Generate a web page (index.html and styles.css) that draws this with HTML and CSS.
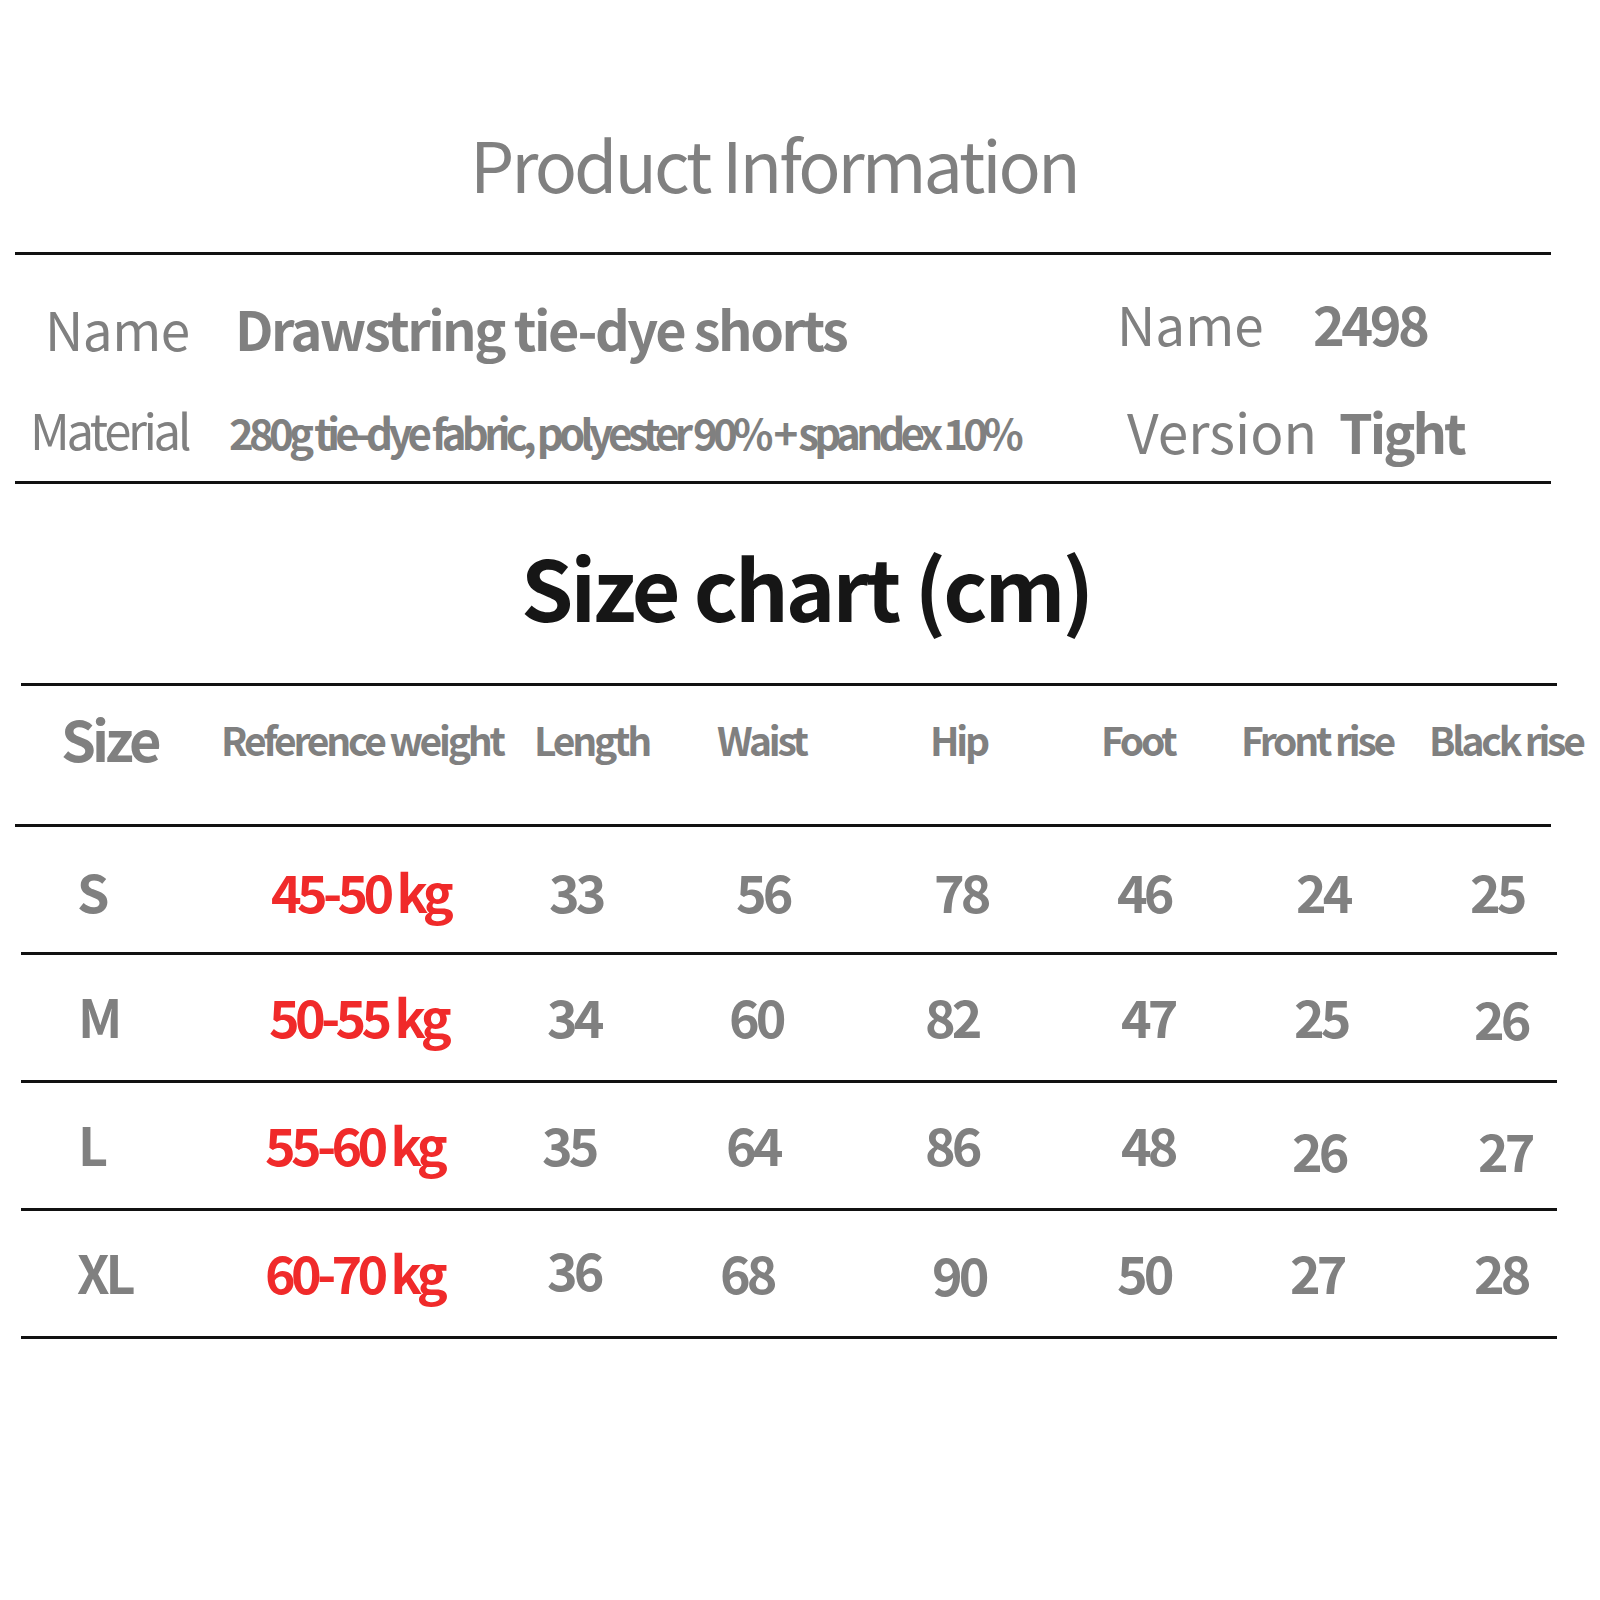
FILE: index.html
```html
<!DOCTYPE html>
<html lang="en">
<head>
<meta charset="utf-8">
<title>Product Information</title>
<link rel="stylesheet" href="styles.css">
</head>
<body>
<div class="page">
  <h1 class="title">Product Information</h1>
  <div class="rule rule-a"></div>

  <div class="info">
    <div class="info-left">
      <div class="info-row row-name">
        <span class="lbl lbl-name">Name</span>
        <span class="val val-name">Drawstring tie-dye shorts</span>
      </div>
      <div class="info-row row-mat">
        <span class="lbl lbl-mat">Material</span>
        <span class="val val-mat">280g tie-dye fabric, polyester 90% + spandex 10%</span>
      </div>
    </div>
    <div class="info-right">
      <div class="info-row row-code">
        <span class="lbl lbl-code">Name</span>
        <span class="val val-code">2498</span>
      </div>
      <div class="info-row row-ver">
        <span class="lbl lbl-ver">Version</span>
        <span class="val val-ver">Tight</span>
      </div>
    </div>
  </div>

  <div class="rule rule-a"></div>

  <h2 class="chart-title">Size chart (cm)</h2>

  <div class="rule rule-b"></div>

  <div class="thead">
    <span class="th th-size">Size</span>
    <span class="th">Reference weight</span>
    <span class="th">Length</span>
    <span class="th">Waist</span>
    <span class="th">Hip</span>
    <span class="th">Foot</span>
    <span class="th">Front rise</span>
    <span class="th">Black rise</span>
  </div>

  <div class="rule rule-a"></div>

  <div class="trow r-s">
    <span class="td td-size">S</span>
    <span class="td td-kg">45-50 kg</span>
    <span class="td">33</span>
    <span class="td">56</span>
    <span class="td">78</span>
    <span class="td">46</span>
    <span class="td">24</span>
    <span class="td">25</span>
  </div>
  <div class="rule rule-b"></div>

  <div class="trow r-m">
    <span class="td td-size">M</span>
    <span class="td td-kg">50-55 kg</span>
    <span class="td">34</span>
    <span class="td">60</span>
    <span class="td">82</span>
    <span class="td">47</span>
    <span class="td">25</span>
    <span class="td low-2">26</span>
  </div>
  <div class="rule rule-b"></div>

  <div class="trow r-l">
    <span class="td td-size">L</span>
    <span class="td td-kg">55-60 kg</span>
    <span class="td">35</span>
    <span class="td">64</span>
    <span class="td">86</span>
    <span class="td">48</span>
    <span class="td low-6">26</span>
    <span class="td low-6">27</span>
  </div>
  <div class="rule rule-b"></div>

  <div class="trow r-xl">
    <span class="td td-size">XL</span>
    <span class="td td-kg">60-70 kg</span>
    <span class="td high-3">36</span>
    <span class="td">68</span>
    <span class="td low-2">90</span>
    <span class="td">50</span>
    <span class="td">27</span>
    <span class="td">28</span>
  </div>
  <div class="rule rule-b"></div>
</div>
</body>
</html>
```

FILE: styles.css
```css
html, body {
  margin: 0;
  padding: 0;
  background: #ffffff;
}

body {
  font-family: "Noto Sans CJK SC", "Noto Sans", sans-serif;
  color: #808080;
}

.page {
  width: 1600px;
  height: 1600px;
  padding-top: 128px;
  box-sizing: border-box;
  white-space: nowrap;
}

.title {
  margin: 0 0 54px 470px;
  font-size: 70px;
  font-weight: 400;
  line-height: 1;
  color: #808080;
  letter-spacing: -3px;
}

.rule {
  height: 3px;
  width: 1536px;
  background: #111111;
}

.rule-a { margin-left: 15px; }
.rule-b { margin-left: 21px; }

/* ---------- info block ---------- */
.info {
  display: flex;
  height: 226px;
}

.info-left {
  width: 1090px;
  display: flex;
  flex-direction: column;
}

.info-right {
  display: flex;
  flex-direction: column;
}

.info-row {
  display: flex;
  align-items: baseline;
  line-height: 1;
}

.row-name { padding: 46px 0 0 45px; height: 55px; }
.row-mat  { padding: 48px 0 0 30px; }
.row-code { padding: 41px 0 0 27px; height: 55px; }
.row-ver  { padding: 52px 0 0 37px; }

.lbl { font-weight: 400; color: #808080; }
.val { font-weight: 700; color: #808080; }

.lbl-name { font-size: 53px; letter-spacing: -0.5px; width: 190px; }
.val-name { font-size: 54px; letter-spacing: -2.5px; }

.lbl-mat { font-size: 49px; letter-spacing: -3.4px; width: 199px; }
.val-mat { font-size: 42px; font-weight: 600; letter-spacing: -4.75px; }

.lbl-code { font-size: 53px; letter-spacing: 0; width: 196px; }
.val-code { font-size: 54px; letter-spacing: -3.5px; }

.lbl-ver { font-size: 55px; letter-spacing: 0; width: 212px; }
.val-ver { font-size: 54px; letter-spacing: -3px; }

/* ---------- size chart ---------- */
.chart-title {
  margin: 0 0 0 521px;
  padding: 60px 0 0;
  height: 199px;
  box-sizing: border-box;
  font-size: 84px;
  font-weight: 700;
  line-height: 1;
  color: #161616;
  letter-spacing: -3px;
}

.thead {
  display: grid;
  grid-template-columns: 160px 313px 183px 213px 171px 140px 188px 160px;
  padding-left: 61px;
  height: 138px;
  align-items: start;
  line-height: 1;
}

.th {
  margin-top: 34px;
  font-size: 39px;
  font-weight: 600;
  letter-spacing: -3.2px;
  color: #808080;
}

.th-size {
  margin-top: 24px;
  font-size: 56px;
  font-weight: 700;
  letter-spacing: -4px;
}

.trow {
  display: grid;
  height: 125px;
  align-items: start;
  line-height: 1;
}

.r-s  { padding-left: 77px; grid-template-columns: 194px 278px 187px 198px 183px 179px 174px 100px; }
.r-m  { padding-left: 78px; grid-template-columns: 191px 278px 182px 196px 196px 173px 180px 100px; }
.r-l  { padding-left: 78px; grid-template-columns: 187px 277px 184px 199px 196px 171px 186px 100px; }
.r-xl { padding-left: 77px; grid-template-columns: 188px 282px 173px 212px 185px 173px 184px 100px; }

.td {
  margin-top: 35px;
  font-size: 52px;
  font-weight: 700;
  color: #808080;
  letter-spacing: -4px;
}

.r-s > .td { margin-top: 38px; }

.td-size {
  font-weight: 600;
  letter-spacing: -4px;
}

.td-kg {
  color: #f02a2a;
  letter-spacing: -4.7px;
}

.low-2 { margin-top: 37px; }
.low-6 { margin-top: 41px; }
.high-3 { margin-top: 32px; }
```
